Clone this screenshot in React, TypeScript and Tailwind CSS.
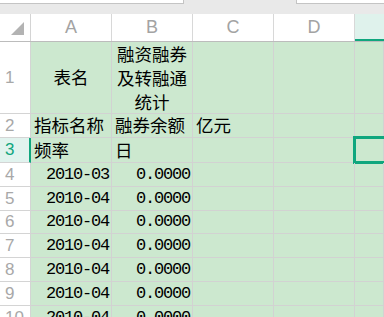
const cjk = "font-['Noto_Sans_CJK_SC',sans-serif]";
const mono = "font-['Liberation_Mono',monospace]";

type Row = {
  n: number;
  a?: string;
  b?: string;
  c?: string;
  num?: boolean;
  h: string;
};

const rows: Row[] = [
  { n: 2, a: "指标名称", b: "融券余额", c: "亿元", h: "h-[24px]" },
  { n: 3, a: "频率", b: "日", h: "h-[25px]" },
  { n: 4, a: "2010-03", b: "0.0000", num: true, h: "h-[24px]" },
  { n: 5, a: "2010-04", b: "0.0000", num: true, h: "h-[24px]" },
  { n: 6, a: "2010-04", b: "0.0000", num: true, h: "h-[23px]" },
  { n: 7, a: "2010-04", b: "0.0000", num: true, h: "h-[24px]" },
  { n: 8, a: "2010-04", b: "0.0000", num: true, h: "h-[24px]" },
  { n: 9, a: "2010-04", b: "0.0000", num: true, h: "h-[24px]" },
  { n: 10, a: "2010-04", b: "0.0000", num: true, h: "h-[24px]" },
];

function RowHead({ n, active }: { n: number; active?: boolean }) {
  return (
    <div
      className={
        "flex w-[31px] shrink-0 items-center border-b pl-[5px] font-['Liberation_Sans',sans-serif] text-[17px] " +
        (active
          ? "border-r-2 border-b-[#d4d4d4] border-r-[#10a67e] bg-[#e1f3ee] text-[#10a67e]"
          : "border-r border-[#d4d4d4] bg-white text-[#a8a8a8]")
      }
    >
      {n}
    </div>
  );
}

function Cell({ text, num, selected, last }: { text?: string; num?: boolean; selected?: boolean; last?: boolean }) {
  return (
    <div
      className={
        "relative flex items-center overflow-visible whitespace-nowrap border-b border-r border-[#d2d2d2] text-black " +
        (last ? "flex-1 " : "w-[81px] shrink-0 ") +
        (num ? `justify-end pr-[2px] ${mono} text-[17px] tracking-[-1.2px]` : `pl-[3px] ${cjk} text-[17.5px]`)
      }
    >
      {text}
      {selected && <div className="absolute -left-[2px] -top-[2px] bottom-[-2px] right-[-40px] border-[3px] border-[#10a67e]" />}
    </div>
  );
}

export default function App() {
  return (
    <div className="h-[317px] w-[384px] overflow-hidden bg-[#cce8cf]">
      <div className="flex h-[14px] justify-between bg-[#e9e9e9]">
        <div className="h-[4px] w-[184px] border-b border-r border-[#c4c4c4] bg-white" />
        <div className="h-[4px] w-[88px] border-b border-l border-[#c4c4c4] bg-white" />
      </div>

      <div className="flex h-[28px] border-b border-[#bcbcbc] bg-white font-['Liberation_Sans',sans-serif] text-[18px] text-[#a3a3a3]">
        <div className="relative w-[31px] shrink-0 border-r border-[#d4d4d4]">
          <svg className="absolute left-[11px] top-[8px]" width="13" height="13" viewBox="0 0 13 13">
            <polygon points="13,0 13,13 0,13" fill="#b3b3b3" />
          </svg>
        </div>
        {["A", "B", "C", "D"].map((l) => (
          <div key={l} className="flex w-[81px] shrink-0 items-center justify-center border-r border-[#d8d8d8]">
            {l}
          </div>
        ))}
        <div className="flex-1 border-b-2 border-[#10a67e] bg-[#dff2ec]" />
      </div>

      <div className="flex h-[72px]">
        <RowHead n={1} />
        <div className={`flex w-[81px] shrink-0 items-center justify-center border-b border-r border-[#d2d2d2] ${cjk} text-[17.5px] text-black`}>
          表名
        </div>
        <div className={`flex w-[81px] shrink-0 items-center justify-center border-b border-r border-[#d2d2d2] text-center ${cjk} text-[17.5px] leading-[24px] text-black`}>
          <div>
            融资融券
            <br />
            及转融通
            <br />
            统计
          </div>
        </div>
        <Cell />
        <Cell />
        <Cell last />
      </div>

      {rows.map((r) => (
        <div key={r.n} className={"flex " + r.h}>
          <RowHead n={r.n} active={r.n === 3} />
          <Cell text={r.a} num={r.num} />
          <Cell text={r.b} num={r.num} />
          <Cell text={r.c} />
          <Cell />
          <Cell last selected={r.n === 3} />
        </div>
      ))}
    </div>
  );
}
